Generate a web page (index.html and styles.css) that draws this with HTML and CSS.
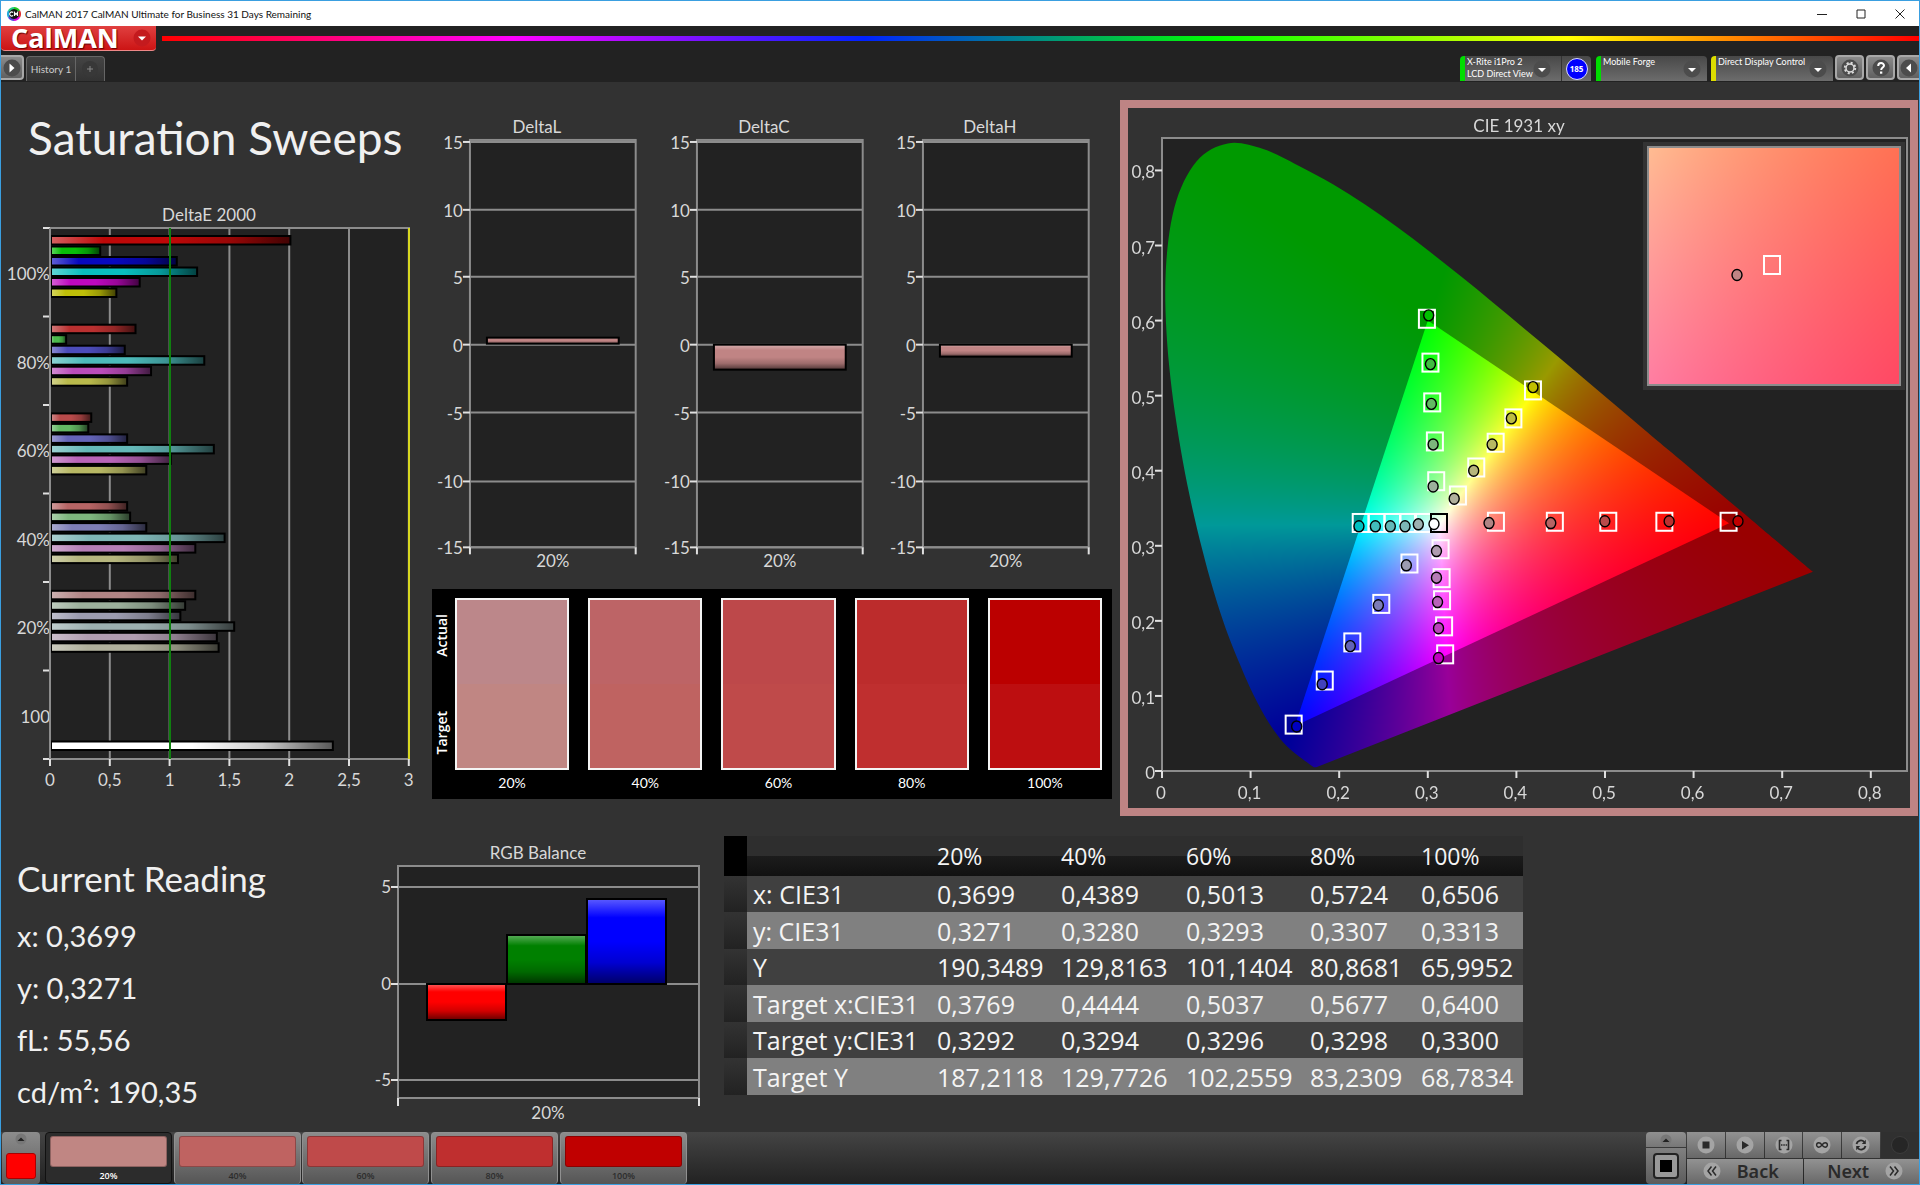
FILE: index.html
```html
<!DOCTYPE html>
<html lang="en">
<head>
<meta charset="utf-8">
<title>CalMAN 2017 CalMAN Ultimate for Business 31 Days Remaining</title>
<link rel="stylesheet" href="styles.css">
</head>
<body>
<svg class="defs" width="0" height="0" aria-hidden="true">
  <defs>
    <linearGradient id="shade-x" x1="0" y1="0" x2="1" y2="0">
      <stop offset="0" stop-color="#fff" stop-opacity=".36"/>
      <stop offset=".22" stop-color="#fff" stop-opacity="0"/>
      <stop offset=".5" stop-color="#000" stop-opacity="0"/>
      <stop offset=".75" stop-color="#000" stop-opacity=".2"/>
      <stop offset="1" stop-color="#000" stop-opacity=".66"/>
    </linearGradient>
    <linearGradient id="shade-y" x1="0" y1="0" x2="0" y2="1">
      <stop offset="0" stop-color="#fff" stop-opacity=".36"/>
      <stop offset=".22" stop-color="#fff" stop-opacity="0"/>
      <stop offset=".5" stop-color="#000" stop-opacity="0"/>
      <stop offset=".75" stop-color="#000" stop-opacity=".18"/>
      <stop offset="1" stop-color="#000" stop-opacity=".6"/>
    </linearGradient>
  </defs>
</svg>
<div class="window">
  <header class="titlebar">
    <svg class="app-icon" viewBox="0 0 14 14"><circle cx="7" cy="7" r="6" fill="#111"/><g fill="none" stroke-width="2"><path d="M7 1a6 6 0 0 1 5.2 3" stroke="#2c2"/><path d="M12.200 4a6 6 0 0 1 0 6" stroke="#d33"/><path d="M12.200 10A6 6 0 0 1 7 13" stroke="#d0d"/><path d="M7 13a6 6 0 0 1-5.200-3" stroke="#54d"/><path d="M1.800 10a6 6 0 0 1 0-6" stroke="#2ad"/><path d="M1.800 4A6 6 0 0 1 7 1" stroke="#2c8"/></g><path d="M6 5.500a2 2 0 1 0 0 3M7.500 9V5.500L9 7.500l1.500-2V9" fill="none" stroke="#fff" stroke-width="1.200"/></svg>
    <span class="window-title">CalMAN 2017 CalMAN Ultimate for Business 31 Days Remaining</span>
    <div class="window-buttons">
      <button aria-label="Minimize"><svg viewBox="0 0 10 10"><path d="M0 5.500h10"/></svg></button>
      <button aria-label="Maximize"><svg viewBox="0 0 10 10"><path d="M1 1h8v8H1z"/></svg></button>
      <button aria-label="Close"><svg viewBox="0 0 10 10"><path d="M.5.5l9 9M9.500.5l-9 9"/></svg></button>
    </div>
  </header>

  <div class="toolbar">
    <div class="brand-row">
      <button class="brand">CalMAN<svg viewBox="0 0 18 18"><circle cx="9" cy="9" r="8.500" fill="#c41a1e"/><path d="M5 7.500h8L9 11.500z" fill="#fff"/></svg></button>
      <div class="rainbow"></div>
    </div>
    <div class="tab-row">
      <button class="key play" aria-label="Run"><svg viewBox="0 0 18 18"><circle cx="9" cy="9" r="8.500" class="dim"/><path d="M6.500 4.500v9l5-4.500z" fill="#fff"/></svg></button>
      <button class="tab">History 1</button>
      <button class="tab add" aria-label="Add history"><svg viewBox="0 0 18 18"><circle cx="9" cy="9" r="8" fill="#383838"/><path d="M6 9h6M9 6v6" stroke="#888" fill="none"/></svg></button>
      <div class="devices">
        <button class="device meter"><span>X-Rite i1Pro 2<br>LCD Direct View</span><svg viewBox="0 0 18 18"><circle cx="9" cy="9" r="8.500" class="dim"/><path d="M5 8h8l-4 4z" fill="#fff"/></svg></button>
        <button class="badge-key" aria-label="Meter count"><b class="badge">185</b></button>
        <button class="device source"><span>Mobile Forge</span><svg viewBox="0 0 18 18"><circle cx="9" cy="9" r="8.500" class="dim"/><path d="M5 8h8l-4 4z" fill="#fff"/></svg></button>
        <button class="device display"><span>Direct Display Control</span><svg viewBox="0 0 18 18"><circle cx="9" cy="9" r="8.500" class="dim"/><path d="M5 8h8l-4 4z" fill="#fff"/></svg></button>
        <button class="key" aria-label="Settings"><svg viewBox="0 0 18 18"><circle cx="9" cy="9" r="8.500" class="dim"/><circle cx="9" cy="9" r="4" fill="none" stroke="#ddd" stroke-width="1.500"/><circle cx="9" cy="9" r="5.300" fill="none" stroke="#ddd" stroke-width="1.800" stroke-dasharray="2.080 2.080"/></svg></button>
        <button class="key" aria-label="Help"><svg viewBox="0 0 18 18"><circle cx="9" cy="9" r="8.500" class="dim"/><path d="M6.200 7c0-4 5.800-3.600 5.800-.4C12 8.600 9.200 8.600 9.200 11" fill="none" stroke="#fff" stroke-width="2"/><path d="M8 12.500h2.300v2.200H8z" fill="#fff"/></svg></button>
        <button class="key last" aria-label="Collapse"><svg viewBox="0 0 18 18"><circle cx="9" cy="9" r="8.500" class="dim"/><path d="M11 4.500v9L6 9z" fill="#fff"/></svg></button>
      </div>
    </div>
  </div>

  <main class="workspace">
    <div class="upper">
      <section class="sweeps">
        <h1>Saturation Sweeps</h1>
        <svg id="delta-e" class="chart" viewBox="1 200 430 616" role="img" aria-label="DeltaE 2000"></svg>
      </section>
      <section class="middle">
        <div class="deltas">
          <svg id="delta-l" class="chart" viewBox="432 114 227 475" role="img" aria-label="DeltaL"></svg>
          <svg id="delta-c" class="chart" viewBox="432 114 227 475" role="img" aria-label="DeltaC"></svg>
          <svg id="delta-h" class="chart" viewBox="432 114 227 475" role="img" aria-label="DeltaH"></svg>
        </div>
        <div class="swatches">
          <div class="sides"><span>Actual</span><span>Target</span></div>
          <div class="swatch s20"><i></i><span>20%</span></div>
          <div class="swatch s40"><i></i><span>40%</span></div>
          <div class="swatch s60"><i></i><span>60%</span></div>
          <div class="swatch s80"><i></i><span>80%</span></div>
          <div class="swatch s100"><i></i><span>100%</span></div>
        </div>
      </section>
      <section class="cie">
        <canvas id="gamut" width="782" height="700"></canvas>
        <svg id="cie-plot" class="chart" viewBox="1128 108 782 700" role="img" aria-label="CIE 1931 xy"></svg>
      </section>
    </div>

    <div class="lower">
      <section class="reading">
        <h2>Current Reading</h2>
        <p>x: 0,3699</p>
        <p>y: 0,3271</p>
        <p>fL: 55,56</p>
        <p>cd/m²: 190,35</p>
      </section>
      <svg id="rgb-balance" class="chart" viewBox="371 816 353 316" role="img" aria-label="RGB Balance"></svg>
      <table class="results">
        <colgroup><col class="c-mark"><col class="c-name"><col class="c-a"><col class="c-b"><col class="c-a"><col class="c-c"><col class="c-d"></colgroup>
        <thead><tr><td class="mark"></td><td></td><th>20%</th><th>40%</th><th>60%</th><th>80%</th><th>100%</th></tr></thead>
        <tbody>
          <tr><td class="mark"></td><th>x: CIE31</th><td>0,3699</td><td>0,4389</td><td>0,5013</td><td>0,5724</td><td>0,6506</td></tr>
          <tr><td class="mark"></td><th>y: CIE31</th><td>0,3271</td><td>0,3280</td><td>0,3293</td><td>0,3307</td><td>0,3313</td></tr>
          <tr><td class="mark"></td><th>Y</th><td>190,3489</td><td>129,8163</td><td>101,1404</td><td>80,8681</td><td>65,9952</td></tr>
          <tr><td class="mark"></td><th>Target x:CIE31</th><td>0,3769</td><td>0,4444</td><td>0,5037</td><td>0,5677</td><td>0,6400</td></tr>
          <tr><td class="mark"></td><th>Target y:CIE31</th><td>0,3292</td><td>0,3294</td><td>0,3296</td><td>0,3298</td><td>0,3300</td></tr>
          <tr><td class="mark"></td><th>Target Y</th><td>187,2118</td><td>129,7726</td><td>102,2559</td><td>83,2309</td><td>68,7834</td></tr>
        </tbody>
      </table>
    </div>
  </main>

  <footer class="dock">
    <button class="series" aria-label="Series colour"><svg viewBox="0 0 12 12"><circle cx="6" cy="6" r="5.500" fill="#777"/><path d="M2.500 8h7L6 4.500z" fill="#222"/></svg><i></i></button>
    <button class="step s20 active"><i></i><span>20%</span></button>
    <button class="step s40"><i></i><span>40%</span></button>
    <button class="step s60"><i></i><span>60%</span></button>
    <button class="step s80"><i></i><span>80%</span></button>
    <button class="step s100"><i></i><span>100%</span></button>
    <div class="transport">
      <div class="pattern">
        <button aria-label="Expand"><svg width="12" height="12" viewBox="0 0 12 12"><circle cx="6" cy="6" r="5.500" fill="#777"/><path d="M2.500 8h7L6 4.500z" fill="#222"/></svg></button>
        <button aria-label="Pattern window"><svg width="26" height="26" viewBox="0 0 26 26"><rect x="1" y="1" width="24" height="24" rx="3" fill="#999" stroke="#222" stroke-width="2"/><path d="M7 7h12v12H7z" fill="#000"/></svg></button>
      </div>
      <div class="controls">
        <div class="control-row">
          <button aria-label="Stop"><svg viewBox="0 0 18 18"><circle cx="9" cy="9" r="8.500" class="lit"/><path d="M5.500 5.500h7v7h-7z"/></svg></button>
          <button aria-label="Play"><svg viewBox="0 0 18 18"><circle cx="9" cy="9" r="8.500" class="lit"/><path d="M6 5v8.500l7-4.200z"/></svg></button>
          <button aria-label="Read series"><svg viewBox="0 0 18 18"><circle cx="9" cy="9" r="8.500" class="lit"/><path d="M6.500 4.500H4.500v9h2M11.500 4.500h2v9h-2" fill="none" stroke="#2a2a2a" stroke-width="1.600"/><path d="M6 8.300h1.500v1.500H6zM8.300 8.300h1.500v1.500H8.300zM10.600 8.300h1.500v1.500h-1.500z"/></svg></button>
          <button aria-label="Read continuously"><svg viewBox="0 0 18 18"><circle cx="9" cy="9" r="8.500" class="lit"/><path d="M9 9C7.500 7 6.800 6.800 5.800 6.800a2.200 2.200 0 0 0 0 4.400C6.800 11.200 7.500 11 9 9s2.200-2.200 3.200-2.200a2.200 2.200 0 0 1 0 4.400C11.200 11.200 10.500 11 9 9z" fill="none" stroke="#2a2a2a" stroke-width="1.400"/></svg></button>
          <button aria-label="Refresh"><svg viewBox="0 0 18 18"><circle cx="9" cy="9" r="8.500" class="lit"/><path d="M4.500 8a4.500 4.500 0 0 1 7.700-2.200M13.500 10a4.500 4.500 0 0 1-7.700 2.200" fill="none" stroke="#2a2a2a" stroke-width="1.800"/><path d="M13.800 3.800V8H9.800zM4.200 14.200V10h4z"/></svg></button>
          <button class="off" aria-label="Unavailable" disabled><svg viewBox="0 0 18 18"><circle cx="9" cy="9" r="8.500" class="unlit"/></svg></button>
        </div>
        <div class="nav-row">
          <button><svg viewBox="0 0 18 18"><circle cx="9" cy="9" r="8.500" class="lit"/><path d="M8.500 4.500L5 9l3.500 4.500M13 4.500L9.500 9l3.500 4.500" fill="none" stroke="#2a2a2a" stroke-width="1.500"/></svg>Back</button>
          <button>Next<svg viewBox="0 0 18 18"><circle cx="9" cy="9" r="8.500" class="lit"/><path d="M5 4.500L8.500 9 5 13.500M9.500 4.500L13 9l-3.500 4.500" fill="none" stroke="#2a2a2a" stroke-width="1.500"/></svg></button>
        </div>
      </div>
    </div>
  </footer>
</div>
<script src="charts.js"></script>
</body>
</html>
```
FILE: styles.css
```css
* { box-sizing: border-box; }
body { margin: 0; background: #323232; color: #f0f0f0; font-family: "Open Sans", "Noto Sans", sans-serif; }
button { font: inherit; color: inherit; border: 0; margin: 0; padding: 0; background: none; }
svg { display: block; flex-shrink: 0; }
.defs { position: absolute; }
.dim { fill: #4c4c4c; }
.lit { fill: #a4a4a4; }
.unlit { fill: #262626; stroke: #3c3c3c; }

.window { display: flex; flex-direction: column; min-height: 100vh; border: 1px solid #3a9fe0; }

.titlebar { display: flex; align-items: center; height: 25px; padding-left: 6px; background: #fff; color: #111; }
.app-icon { width: 14px; height: 14px; margin-right: 4px; }
.window-title { flex: 1; font-size: 10px; line-height: 16px; font-family: Lato, "Noto Sans", sans-serif; }
.window-buttons { display: flex; gap: 29px; padding-right: 14px; }
.window-buttons svg { width: 10px; height: 10px; fill: none; stroke: #222; }

.toolbar { height: 56px; background: #222; }
.brand-row { display: flex; align-items: center; height: 28px; padding-bottom: 3px; gap: 6px; }
.brand { display: flex; align-items: center; justify-content: space-between; width: 155px; height: 25px; padding: 0 5px 0 10px; border-radius: 0 0 4px 4px; background: linear-gradient(#e04040, #cc1414); border-bottom: 1px solid #e88; color: #fff; font-weight: 700; font-size: 27px; line-height: 24px; text-shadow: 1px 1px 1px #600; }
.brand svg { width: 18px; height: 18px; }
.rainbow { flex: 1; height: 5px; background: linear-gradient(90deg, #f00, #f0f 20%, #02f 40%, #0f0 60%, #ff0 80%, #f00); }
.tab-row { display: flex; align-items: flex-end; height: 28px; padding-bottom: 1px; }
.key { display: flex; align-items: center; justify-content: center; width: 29px; height: 25px; margin: 0 2px 1px 0; border: 2px solid #a8a8a8; border-radius: 4px; background: linear-gradient(#8a8a8a, #606060); }
.key svg, .device svg, .tab svg { width: 18px; height: 18px; }
.play { width: 23px; border-left: 0; border-radius: 0 4px 4px 0; }
.tab { width: 50px; height: 25px; border: 1px solid #666; border-bottom: 0; border-radius: 4px 0 0 0; background: linear-gradient(#444, #333); color: #ccc; font-size: 10px; font-family: Lato, sans-serif; }
.tab.add { display: flex; align-items: center; justify-content: center; width: 29px; border-left: 0; border-radius: 0 4px 0 0; }
.devices { display: flex; align-items: flex-end; margin-left: auto; }
.device { display: flex; justify-content: space-between; height: 25px; padding: 0 6px 0 2px; border-left: 5px solid #0d0; border-radius: 4px 4px 0 0; background: linear-gradient(#484848, #6c6c6c); color: #fff; font-size: 9px; line-height: 12px; text-align: left; font-family: Lato, sans-serif; }
.device span { white-space: nowrap; }
.device svg { margin-top: 4px; }
.meter { width: 101px; padding-right: 13px; border-radius: 4px 0 0 0; }
.badge-key { display: flex; align-items: center; justify-content: center; width: 30px; height: 25px; margin-right: 5px; border-left: 1px solid #333; border-radius: 0 4px 0 0; background: linear-gradient(#484848, #6c6c6c); }
.badge { width: 22px; height: 22px; border: 1px solid #ddf; border-radius: 50%; background: #00f; color: #fff; font-size: 8px; line-height: 20px; text-align: center; }
.source { width: 111px; margin-right: 4px; }
.display { width: 122px; margin-right: 2px; border-left-color: #dd0; }
.key.last { width: 22px; margin-right: 0; border-right: 0; border-radius: 4px 0 0 4px; }

.workspace { flex: 1; }
.upper { display: grid; grid-template-columns: 430fr 689fr 798fr; padding-right: 1px; }
.chart { width: 100%; font-family: Lato, "Noto Sans", sans-serif; font-size: 17px; }
.chart text { fill: #d8d8d8; }
h1, h2, p { margin: 0; font-family: Lato, "Noto Sans", sans-serif; font-weight: 400; }
h1 { padding: 26px 0 32px 27px; font-size: 46px; line-height: 60px; white-space: nowrap; }
.middle { padding: 32px 8px 0 1px; }
.deltas { display: grid; grid-template-columns: repeat(3, 1fr); }
.swatches { display: flex; margin-top: 1px; background: #000; padding: 9px 10px 0 0; }
.sides { display: flex; flex-direction: column; justify-content: space-between; align-items: center; width: 23px; height: 172px; padding: 16px 4px 16px 0; }
.sides span { writing-mode: vertical-rl; rotate: 180deg; font-size: 14px; line-height: 16px; font-weight: 600; color: #fff; }
.swatch { flex: 1; text-align: center; font-family: Lato, sans-serif; font-size: 14px; line-height: 18px; color: #fff; }
.swatch + .swatch { margin-left: 19px; }
.swatch i { display: block; height: 172px; margin-bottom: 4px; border: 2px solid #f4f4f4; background: linear-gradient(var(--actual) 50%, var(--target) 50%); }
.swatch span { display: block; padding-bottom: 7px; }
.s20 { --actual: #bc878a; --target: #c08683; }
.s40 { --actual: #bd6466; --target: #bf6361; }
.s60 { --actual: #bd484a; --target: #bf4a4a; }
.s80 { --actual: #bc2c2c; --target: #bf2f2f; }
.s100 { --actual: #bb0000; --target: #bd0e10; }

.cie { display: grid; margin-top: 18px; border: 8px solid #be8484; align-self: start; }
.cie > * { grid-area: 1 / 1; width: 100%; }

.lower { display: grid; grid-template-columns: 370fr 353fr 799fr 396fr; align-items: start; }
.reading { padding: 40px 0 0 16px; }
h2 { margin-bottom: 16px; font-size: 35px; line-height: 44px; white-space: nowrap; }
.reading p { padding-bottom: 12px; font-size: 29px; line-height: 40px; }
.results { width: 100%; margin-top: 20px; border-collapse: collapse; table-layout: fixed; font-size: 25px; line-height: 28px; color: #f4f4f4; }
.c-mark { width: 23px; } .c-name { width: 183px; } .c-a { width: 124px; } .c-b { width: 125px; } .c-c { width: 111px; } .c-d { width: 109px; }
.results td, .results th { padding: 0 0 0 7px; font-weight: 400; text-align: left; white-space: nowrap; }
.results tbody th { padding-left: 6px; }
.results thead tr { height: 40px; background: linear-gradient(#2e2e2e 0 50%, #1c1c1c 50%, #111); }
.results thead th { font-size: 23px; }
.results tbody tr { height: 36px; background: #404040; }
.results tbody tr:nth-child(even) { height: 37px; background: #808080; }
.results .mark { background: linear-gradient(#333, #222); }
.results thead .mark { background: #000; }

.dock { display: flex; height: 52px; background: linear-gradient(#444, #222); }
.series { display: flex; flex-direction: column; align-items: center; width: 38px; margin: 0 5px 0 1px; padding-top: 1px; border-radius: 4px; background: linear-gradient(#8c8c8c, #5c5c5c); }
.series svg { width: 12px; height: 12px; }
.series i { width: 30px; height: 26px; margin-top: 8px; border: 1px solid #a00; border-radius: 3px; background: #f00; }
.step { width: 127px; height: 52px; margin-right: 2px; padding: 3px 4px; border-radius: 4px; border: 1px solid #909090; border-bottom: 0; background: linear-gradient(#8c8c8c, #555); color: #2c2c2c; font-size: 9px; line-height: 12px; font-weight: 600; }
.step:nth-child(3n) { margin-right: 1px; }
.step i { display: block; height: 31px; margin-bottom: 3px; border: 1px solid #0004; border-radius: 3px; background: var(--target); }
.step.s100 i { background: #c00000; }
.step span { display: block; }
.step.active { background: #2c2c2c; border: 1px solid #111; color: #fff; }
.transport { display: flex; gap: 1px; width: 273px; margin-left: auto; color: #2a2a2a; }
.pattern { display: flex; flex-direction: column; width: 40px; gap: 1px; }
.pattern button { display: flex; align-items: center; justify-content: center; height: 15px; border-radius: 4px 4px 0 0; background: linear-gradient(#909090, #777); }
.pattern button + button { flex: 1; border-radius: 0 0 4px 4px; background: linear-gradient(#808080, #5c5c5c); }
.controls { flex: 1; display: flex; flex-direction: column; gap: 1px; }
.control-row, .nav-row { display: flex; gap: 1px; flex: 1; }
.control-row button, .nav-row button { flex: 1; display: flex; align-items: center; justify-content: center; background: linear-gradient(#929292, #686868); }
.control-row svg, .nav-row svg { width: 18px; height: 18px; fill: #2a2a2a; }
.control-row .off { background: #303030; }
.nav-row button { gap: 16px; font-size: 18px; line-height: 24px; font-weight: 600; font-family: "Noto Sans", sans-serif; }
.nav-row button:first-child { padding-right: 8px; }
.nav-row button:last-child { padding-left: 8px; }
```
FILE: charts.js
```js
const NS = 'http://www.w3.org/2000/svg';

function add(parent, name, attrs, text) {
  const el = document.createElementNS(NS, name);
  for (const key in attrs) el.setAttribute(key, attrs[key]);
  if (text !== undefined) el.textContent = text;
  parent.appendChild(el);
  return el;
}
const line = (svg, x1, y1, x2, y2, color = '#8c8c8c', width = 2) =>
  add(svg, 'line', { x1, y1, x2, y2, stroke: color, 'stroke-width': width });
const label = (svg, x, y, text, anchor = 'middle') =>
  add(svg, 'text', { x, y: y + 6, 'text-anchor': anchor }, text);
const frame = (svg, x, y, w, h, fill = '#222') =>
  add(svg, 'rect', { x, y, width: w, height: h, fill, stroke: '#8c8c8c', 'stroke-width': 2 });

function bar(svg, x, y, w, h, color, shade) {
  add(svg, 'rect', { x, y, width: w, height: h, fill: color });
  add(svg, 'rect', { x, y, width: w, height: h, fill: `url(#${shade})`, stroke: '#000', 'stroke-width': 2 });
}

/* DeltaE 2000 */
function drawDeltaE() {
  const svg = document.getElementById('delta-e');
  const x0 = 50, y0 = 228, unit = 119.6, slot = 88.5, height = 531;
  label(svg, 209, 215, 'DeltaE 2000');
  frame(svg, x0, y0, 359, height);
  ['0', '0,5', '1', '1,5', '2', '2,5', '3'].forEach((t, i) => {
    const x = x0 + i * unit / 2;
    line(svg, x, y0, x, y0 + height);
    line(svg, x, y0 + height, x, y0 + height + 7, '#e0e0e0');
    label(svg, x, 780, t);
  });
  const hi = [190, 186, 184, 182, 176], lo = [8, 76, 100, 126, 156], redLo = [8, 48, 74, 100, 132];
  const rows = [
    [2.01, .42, 1.06, 1.23, .75, .555],
    [.715, .135, .625, 1.29, .845, .645],
    [.345, .32, .645, 1.37, 1.01, .805],
    [.645, .67, .805, 1.46, 1.215, 1.07],
    [1.215, 1.13, 1.09, 1.54, 1.395, 1.41]
  ];
  rows.forEach((values, g) => values.forEach((v, s) => {
    const h = hi[g], l = lo[g];
    const rgb = [[h, redLo[g], redLo[g]], [l, h, l], [l, l, h], [l, h, h], [h, l, h], [h, h, l]][s];
    bar(svg, x0 + 1, y0 + 8 + g * 88.7 + s * 10.5, v * unit - 1, 8.5, `rgb(${rgb})`, 'shade-x');
  }));
  bar(svg, x0 + 1, 741.5, 2.365 * unit - 1, 8.5, '#fff', 'shade-x');
  for (let i = 0; i <= 6; i++) line(svg, x0 - 7, y0 + i * slot, x0, y0 + i * slot, '#e0e0e0');
  ['100%', '80%', '60%', '40%', '20%', '100'].forEach((t, i) => label(svg, x0, 274 + i * slot, t, 'end'));
  line(svg, x0, y0, x0, y0 + height);
  line(svg, 170, y0, 170, y0 + height, '#0f7f0f');
  line(svg, 409, y0, 409, y0 + height, '#d8d820');
}

/* DeltaL, DeltaC, DeltaH */
function drawDelta(id, title, top, bottom) {
  const svg = document.getElementById(id);
  label(svg, 537, 127, title);
  frame(svg, 470, 140, 166, 408);
  const rows = [['15', 142], ['10', 210], ['5', 277], ['0', 345], ['-5', 413], ['-10', 482], ['-15', 548]];
  rows.forEach(([t, y]) => {
    line(svg, 470, y, 636, y);
    line(svg, 463, y, 470, y, '#e0e0e0');
    label(svg, 463, y + 1, t, 'end');
  });
  line(svg, 470, 548, 470, 555, '#e0e0e0');
  line(svg, 636, 548, 636, 555, '#e0e0e0');
  label(svg, 553, 562, '20%');
  bar(svg, 487, top, 132, bottom - top, '#c08484', 'shade-y');
}

/* RGB Balance */
function drawBalance() {
  const svg = document.getElementById('rgb-balance');
  label(svg, 538, 853, 'RGB Balance');
  frame(svg, 398, 866, 301, 232);
  [['5', 887], ['0', 984], ['-5', 1080]].forEach(([t, y]) => {
    line(svg, 398, y, 699, y);
    line(svg, 391, y, 398, y, '#e0e0e0');
    label(svg, 391, y, t, 'end');
  });
  line(svg, 398, 1098, 398, 1106, '#e0e0e0');
  line(svg, 699, 1098, 699, 1106, '#e0e0e0');
  label(svg, 548, 1113, '20%');
  bar(svg, 427, 984, 79, 36, '#f00', 'shade-y');
  bar(svg, 507, 935, 79, 49, '#008000', 'shade-y');
  bar(svg, 587, 899, 79, 85, '#00f', 'shade-y');
}

/* Chromaticity diagram */
const ORIGIN_X = 1162, ORIGIN_Y = 771, SCALE_X = 886, SCALE_Y = 750.7;
const px = x => ORIGIN_X + x * SCALE_X;
const py = y => ORIGIN_Y - y * SCALE_Y;
const LOCUS = [
  [.1741, .005], [.1714, .0051], [.1689, .0069], [.1644, .0109], [.1566, .0177], [.144, .0297],
  [.1355, .0399], [.1241, .0578], [.1096, .0868], [.0913, .1327], [.0687, .2007], [.0454, .295],
  [.0235, .4127], [.0082, .5384], [.0039, .6548], [.0139, .7502], [.0389, .812], [.0743, .836],
  [.1142, .8285], [.1547, .8059], [.1929, .7816], [.2296, .7543], [.2658, .7243], [.3016, .6923],
  [.3373, .6589], [.3731, .6245], [.4087, .5896], [.4441, .5547], [.4788, .5202], [.5125, .4866],
  [.5448, .4544], [.5752, .4242], [.627, .3725], [.6658, .334], [.6915, .3083], [.719, .2809], [.7347, .2653]
];

/* Brightest linear RGB for a chromaticity, with channels outside the gamut clamped. */
function chromaColor(x, y) {
  y = Math.max(y, .001);
  const X = x / y, Z = (1 - x - y) / y;
  const rgb = [
    3.2406 * X - 1.5372 - .4986 * Z,
    -.9689 * X + 1.8758 + .0415 * Z,
    .0557 * X - .204 + 1.057 * Z
  ].map(v => Math.max(v, 0));
  const max = Math.max(...rgb) || 1;
  return rgb.map(v => 255 * v / max);
}

function shaded(w, h, toXY, gain) {
  const layer = document.createElement('canvas');
  layer.width = w;
  layer.height = h;
  const ctx = layer.getContext('2d');
  const img = ctx.createImageData(w, h);
  for (let j = 0, k = 0; j < h; j++) {
    for (let i = 0; i < w; i++, k += 4) {
      const c = chromaColor(...toXY(i, j));
      img.data[k] = c[0] * gain;
      img.data[k + 1] = c[1] * gain;
      img.data[k + 2] = c[2] * gain;
      img.data[k + 3] = 255;
    }
  }
  ctx.putImageData(img, 0, 0);
  return layer;
}

function drawGamut() {
  const canvas = document.getElementById('gamut');
  const ctx = canvas.getContext('2d');
  const ox = 1128, oy = 108;
  ctx.fillStyle = '#222';
  ctx.fillRect(1162 - ox, 138 - oy, 745, 633);
  const toXY = (i, j) => [(i + ox - ORIGIN_X) / SCALE_X, (ORIGIN_Y - j - oy) / SCALE_Y];

  /* Smooth curve through every point of the spectral locus. */
  const pts = LOCUS.map(([x, y]) => [px(x) - ox, py(y) - oy]);
  ctx.save();
  ctx.beginPath();
  ctx.moveTo(...pts[0]);
  for (let i = 0; i < pts.length - 1; i++) {
    const a = pts[Math.max(i - 1, 0)], b = pts[i], c = pts[i + 1], d = pts[Math.min(i + 2, pts.length - 1)];
    ctx.bezierCurveTo(
      b[0] + (c[0] - a[0]) / 6, b[1] + (c[1] - a[1]) / 6,
      c[0] - (d[0] - b[0]) / 6, c[1] - (d[1] - b[1]) / 6,
      c[0], c[1]
    );
  }
  ctx.closePath();
  ctx.clip();
  ctx.drawImage(shaded(782, 700, toXY, .6), 0, 0);
  ctx.restore();

  ctx.save();
  ctx.beginPath();
  [[.3, .6], [.64, .33], [.15, .06]].forEach(([x, y]) => ctx.lineTo(px(x) - ox, py(y) - oy));
  ctx.clip();
  ctx.drawImage(shaded(782, 700, toXY, 1), 0, 0);
  ctx.restore();

  const zoom = (i, j) => [.3769 + (i - 124) * .0002, .3292 + (119 - j) * .0002];
  ctx.drawImage(shaded(252, 238, zoom, 1), 1648 - ox, 147 - oy);
}

function drawCie() {
  const svg = document.getElementById('cie-plot');
  label(svg, 1519, 126, 'CIE 1931 xy');
  frame(svg, 1162, 138, 745, 633, 'none');
  for (let i = 0; i <= 8; i++) {
    const t = i ? '0,' + i : '0';
    line(svg, px(i / 10), 771, px(i / 10), 778, '#e0e0e0');
    label(svg, px(i / 10) - 1, 793, t);
    line(svg, 1155, py(i / 10), 1162, py(i / 10), '#e0e0e0');
    label(svg, 1155, py(i / 10) + 2, t, 'end');
  }
  add(svg, 'rect', { x: 1645, y: 144, width: 258, height: 244, fill: 'none', stroke: '#333', 'stroke-width': 4 });
  add(svg, 'rect', { x: 1648, y: 147, width: 252, height: 238, fill: 'none', stroke: '#8c8c8c', 'stroke-width': 2 });

  const square = (x, y, color = '#fff') =>
    add(svg, 'rect', { x: x - 8, y: y - 9, width: 16, height: 18, fill: 'none', stroke: color, 'stroke-width': 2 });
  const dot = (x, y, fill) =>
    add(svg, 'ellipse', { cx: x, cy: y, rx: 5, ry: 5.5, fill, stroke: '#000', 'stroke-width': 1.4 });

  /* Each entry: target x, target y, measured x, measured y; from 20% to 100% saturation. */
  const sweeps = {
    green: [[.3095, .386, .306, .379], [.308, .439, .306, .435], [.305, .491, .304, .489], [.303, .544, .303, .542], [.299, .6024, .301, .607]],
    yellow: [[.334, .367, .3298, .3627], [.3547, .4043, .3518, .4], [.3766, .4373, .3726, .4349], [.3966, .4697, .3943, .4697], [.4187, .507, .4187, .5113]],
    cyan: [[.2946, .3304, .2893, .3286], [.2777, .3304, .2743, .326], [.2602, .3304, .2577, .326], [.2421, .3304, .2408, .326], [.2243, .3304, .2223, .326]],
    blue: [[.2793, .2764, .2758, .274], [.2475, .2226, .2442, .2208], [.2148, .1713, .2125, .1664], [.1837, .1205, .1808, .1156], [.1486, .0618, .152, .0593]],
    magenta: [[.3144, .2954, .3098, .293], [.3156, .2569, .3098, .2575], [.3161, .2275, .311, .2251], [.3184, .1927, .3121, .1902], [.3196, .1554, .3121, .1505]],
    red: [[.3769, .332, .3691, .3303], [.4434, .332, .4388, .3303], [.5037, .332, .4998, .3327], [.567, .332, .5724, .3327], [.6395, .332, .6501, .3327]]
  };
  const mask = { green: [0, 1, 0], yellow: [1, 1, 0], cyan: [0, 1, 1], blue: [0, 0, 1], magenta: [1, 0, 1], red: [1, 0, 0] };
  const hi = [176, 182, 184, 188, 192], lo = [156, 124, 98, 66, 0], redLo = [132, 100, 74, 48, 0];
  for (const name in sweeps) sweeps[name].forEach(p => square(px(p[0]), py(p[1])));
  square(1439, 523, '#000');
  for (const name in sweeps) {
    sweeps[name].forEach((p, i) => {
      const rgb = mask[name].map(on => on ? hi[i] : name === 'red' ? redLo[i] : lo[i]);
      dot(px(p[2]), py(p[3]), `rgb(${rgb})`);
    });
  }
  dot(1434, 524, '#fff');
  square(1772, 265);
  dot(1737, 275, '#c08484');
}

drawDeltaE();
drawDelta('delta-l', 'DeltaL', 338, 344);
drawDelta('delta-c', 'DeltaC', 345, 370);
drawDelta('delta-h', 'DeltaH', 345, 357);
drawBalance();
drawGamut();
drawCie();
```
